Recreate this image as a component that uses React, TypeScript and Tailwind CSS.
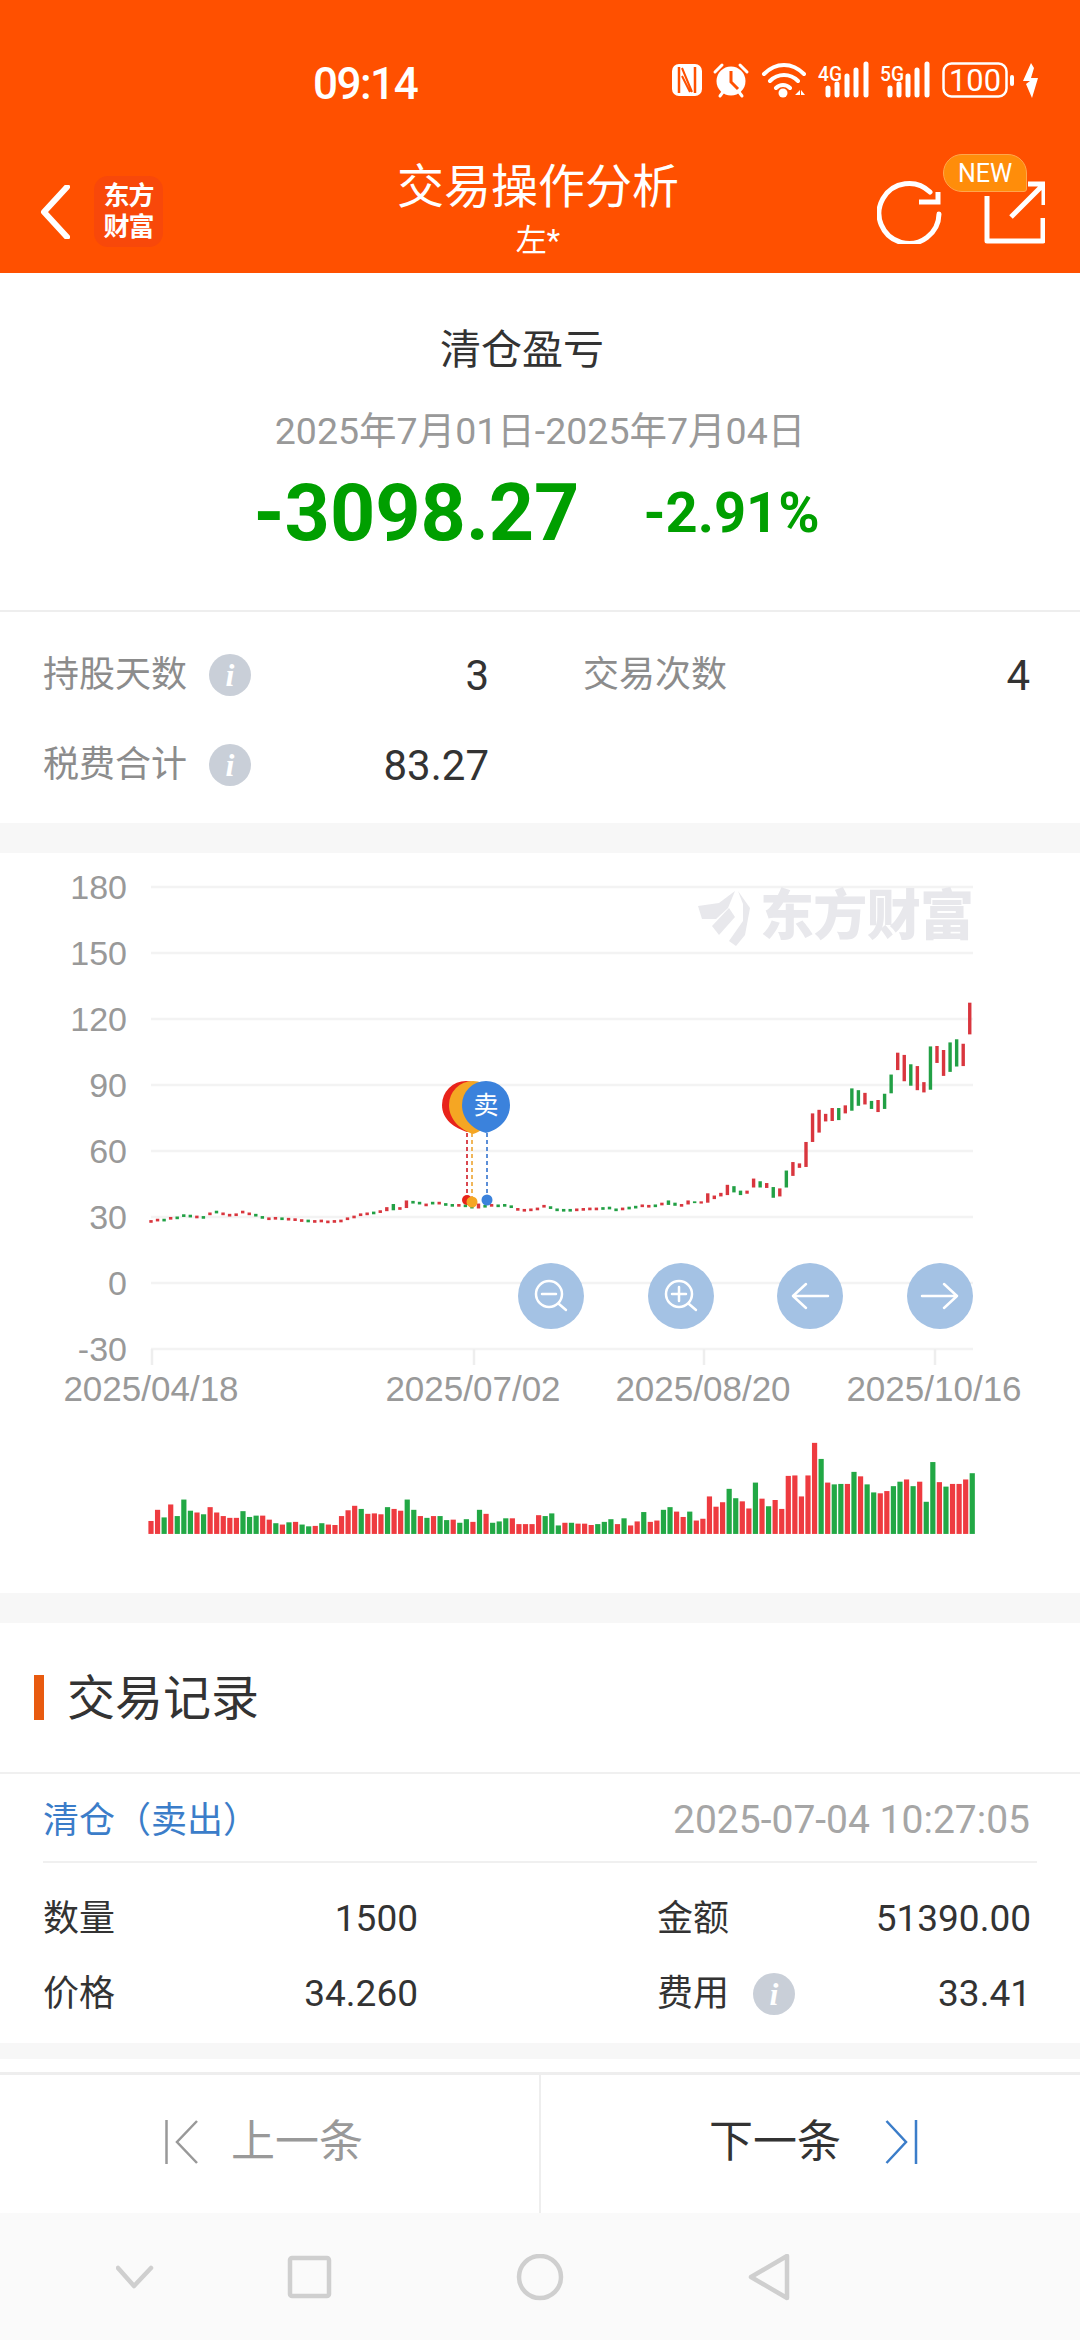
const sans = "font-['Roboto','Noto_Sans_CJK_SC',sans-serif]";

// volume bar tops and colours, read off the chart (y in zoomed crop units)
const volTops = [
  1503, 1478, 1495, 1466, 1492, 1455, 1480, 1484, 1488, 1472, 1484, 1492, 1496, 1496, 1481, 1494, 1491, 1491, 1500, 1508,
  1511, 1506, 1505, 1511, 1515, 1514, 1508, 1511, 1512, 1492, 1479, 1469, 1476, 1487, 1486, 1488, 1472, 1476, 1480, 1455,
  1478, 1492, 1496, 1492, 1492, 1501, 1500, 1507, 1499, 1505, 1478, 1487, 1507, 1504, 1497, 1497, 1510, 1510, 1510, 1490,
  1492, 1486, 1513, 1507, 1507, 1509, 1509, 1512, 1510, 1505, 1499, 1510, 1497, 1513, 1504, 1483, 1505, 1502, 1478, 1472,
  1482, 1494, 1482, 1502, 1498, 1448, 1471, 1461, 1431, 1452, 1459, 1475, 1417, 1453, 1470, 1456, 1476, 1402, 1401, 1448,
  1401, 1328, 1364, 1417, 1421, 1420, 1420, 1393, 1403, 1421, 1439, 1441, 1436, 1425, 1415, 1410, 1425, 1415, 1460, 1371,
  1416, 1426, 1420, 1420, 1410, 1396,
];
const volColors =
  "RRGRGGGRGRRRRRGGGRRGRGRGGRGRRRRRGRRRGRRGGRGRGGRGGRGRGGGRRRRR" +
  "GGGRGRRRGGGRGRRGRRGGRRGRRRRRGGRRGRGRRRRRRRGRGGRGRGGRRGGRGRGGRGRRR";

const flatCenters = [
  832, 829, 829, 825, 824, 819, 820, 822, 823, 815, 811, 815, 818, 817, 811, 815, 818, 823, 826, 825,
  826, 827, 828, 830, 831, 832, 831, 833, 832, 831, 826, 822, 817, 815, 813, 810, 805, 800, 803, 793,
  789, 791, 795, 791, 791, 794, 796, 796, 797, 800, 797, 798, 796, 797, 796, 799, 805, 807, 806, 804,
  798, 801, 806, 807, 807, 806, 805, 804, 804, 803, 802, 806, 804, 802, 800, 797, 798, 797, 793,
];
const tallFlat: Record<number, [number, number]> = {
  36: [800, 809],
  37: [793, 807],
  39: [785, 802],
  50: [792, 803],
};
const candleTail: [number, number][] = [
  [785, 795], [790, 797], [793, 799], [785, 794], [787, 791], [787, 792], [769, 790], [774, 782], [768, 776], [750, 773],
  [753, 767], [763, 773], [763, 770], [736, 756], [742, 756], [746, 757], [755, 779], [758, 776], [718, 756], [699, 730],
  [702, 712], [654, 710], [590, 654], [582, 633], [591, 608], [578, 607], [578, 605], [572, 590], [534, 584], [538, 573],
  [544, 570], [562, 580], [560, 587], [546, 580], [503, 545], [454, 493], [459, 518], [480, 528], [484, 538], [520, 543],
  [440, 537], [439, 477], [448, 506], [431, 497], [424, 485], [434, 484], [342, 413],
];
const candleColors =
  "RRGRGGGRGRGRRRRRGGRRGRRRGRRRRRRRRRGRRGRRGGRGRGGRGGRGRGGGRRRRRGGGGRRRRGGGRGGRRGR" +
  "GGRRGRRRRRGGRRGRGRGRRRRRRRGRGGRGRGGRRGRRGRRGGRRRR";

const candles = [
  ...flatCenters.map((c, i) => tallFlat[i] ?? ([c - 3, c + 3] as [number, number])),
  ...candleTail,
];

const toY = (zoomed: number) => 850 + zoomed / 2.24;

const grid = [
  { label: "180", y: 887 },
  { label: "150", y: 953 },
  { label: "120", y: 1019 },
  { label: "90", y: 1085 },
  { label: "60", y: 1151 },
  { label: "30", y: 1217 },
  { label: "0", y: 1283 },
  { label: "-30", y: 1349 },
];
const ticks = [
  { label: "2025/04/18", x: 151 },
  { label: "2025/07/02", x: 473 },
  { label: "2025/08/20", x: 703 },
  { label: "2025/10/16", x: 934 },
];

function InfoDot() {
  return (
    <span className="flex h-[42px] w-[42px] items-center justify-center rounded-full bg-[#c9cfd8] font-['Liberation_Serif',serif] text-[32px] font-bold italic leading-none text-white">
      i
    </span>
  );
}

function StatusIcons() {
  return (
    <div className="flex items-center text-white">
      <svg width="366" height="40" viewBox="672 60 366 40" fill="none">
        {/* nfc */}
        <rect x="672" y="64" width="30" height="32" rx="7" fill="#fff" />
        <path d="M679 67V93M695 67V93" stroke="#ff5000" strokeWidth="2.5" />
        <path d="M682 68L692 92M682 76L690 92" stroke="#ff5000" strokeWidth="2" />
        {/* alarm */}
        <circle cx="731" cy="81" r="14.5" fill="#fff" />
        <path d="M731 71V82L738 89" stroke="#ff5000" strokeWidth="3" />
        <path d="M715 72L722 65M747 72L740 65M720 96L723 92M742 96L739 92" stroke="#fff" strokeWidth="3" strokeLinecap="round" />
        {/* wifi */}
        <path d="M764 74C776 62 792 62 804 74M770 81C778 73 790 73 798 81M776 88C780 84 786 84 790 88" stroke="#fff" strokeWidth="4" strokeLinecap="round" />
        <circle cx="783" cy="93" r="4.5" fill="#fff" />
        <path d="M795 95L800 90V95ZM801 90L805 95H801Z" fill="#fff" />
        {/* signal 4g */}
        <text x="818" y="81" fill="#fff" fontSize="21" fontWeight="500" fontFamily="Roboto, sans-serif" textLength="24" lengthAdjust="spacingAndGlyphs">4G</text>
        <path d="M828 88V95M837 84V95M847 76V95M866 64V95M856 70V95" stroke="#fff" strokeWidth="5" strokeLinecap="round" />
        {/* signal 5g */}
        <text x="880" y="81" fill="#fff" fontSize="21" fontWeight="500" fontFamily="Roboto, sans-serif" textLength="24" lengthAdjust="spacingAndGlyphs">5G</text>
        <path d="M890 88V95M899 84V95M908 76V95M927 64V95M917 70V95" stroke="#fff" strokeWidth="5" strokeLinecap="round" />
        {/* battery */}
        <rect x="943.5" y="63.5" width="63" height="33" rx="8" stroke="#fff" strokeWidth="2.5" />
        <text x="975" y="91" fill="#fff" fontSize="31" textAnchor="middle" fontFamily="Roboto, sans-serif" textLength="52" lengthAdjust="spacingAndGlyphs">100</text>
        <rect x="1010" y="75" width="4" height="11" rx="2" fill="#fff" />
        <path d="M1031 63L1023 81H1030L1026 84L1032 98L1038 78H1031L1034 68Z" fill="#fff" />
      </svg>
    </div>
  );
}

function Header() {
  return (
    <header className="flex h-[273px] flex-col bg-[#ff5000] text-white">
      <div className="flex h-[154px] items-start justify-between pl-[313px] pr-[42px] pt-[60px]">
        <span className="text-[44px] font-medium leading-[48px] tracking-[-1.5px]">09:14</span>
        <StatusIcons />
      </div>
      <div className="grid flex-1 grid-cols-[1fr_auto_1fr] items-start">
        <div className="flex items-center pl-[40px] pt-[22px]">
          <svg width="30" height="54" viewBox="0 0 30 54" fill="none">
            <path d="M27 2L4 27L27 52" stroke="#fff" strokeWidth="6" strokeLinecap="round" strokeLinejoin="round" />
          </svg>
          <div className="ml-[24px] flex h-[71px] w-[69px] flex-col items-center justify-center rounded-[14px] bg-[#f8480a] text-[26px] font-bold leading-[31px] tracking-[-1px]">
            <span>东方</span>
            <span>财富</span>
          </div>
        </div>
        <div className="mr-[4px] flex flex-col items-center pt-[5px]">
          <h1 className="text-[47px] font-normal leading-[56px]">交易操作分析</h1>
          <span className="mt-[8px] text-[31px] leading-[36px]">左*</span>
        </div>
        <div className="relative flex justify-end pr-[35px] pt-[24px]">
          <svg width="168" height="66" viewBox="877 172 168 66" fill="none">
            <path d="M939 208A30 30 0 1 1 930 186" stroke="#fff" strokeWidth="5" strokeLinecap="round" />
            <path d="M919 196H938V186" stroke="#fff" strokeWidth="5" />
            <path d="M987 190V235H1043V212" stroke="#fff" strokeWidth="5" strokeLinejoin="round" />
            <path d="M1011 211L1043 179M1028 178H1044V199" stroke="#fff" strokeWidth="5" />
          </svg>
          <span className="absolute right-[53px] top-0 flex h-[38px] w-[84px] items-center justify-center rounded-[19px] rounded-br-[3px] border border-[#ffa64d] bg-[#ff8d0a] text-[25px] leading-none">
            NEW
          </span>
        </div>
      </div>
    </header>
  );
}

function Summary() {
  return (
    <section className="flex h-[339px] flex-col items-center border-b-2 border-[#eeeeee] bg-white pt-[50px]">
      <h2 className="mr-[36px] text-[41px] font-normal leading-[54px] text-[#333333]">清仓盈亏</h2>
      <p className="mt-[32px] text-[37.5px] leading-[44px] text-[#999999]">2025年7月01日-2025年7月04日</p>
      <div className="mr-[7px] mt-[18px] flex items-center gap-[64px] text-[#009f00]">
        <span className="text-[79px] font-bold leading-[84px]">-3098.27</span>
        <span className="text-[56px] font-bold leading-[60px]">-2.91%</span>
      </div>
    </section>
  );
}

function StatCell({ label, value, info }: { label: string; value: string; info?: boolean }) {
  return (
    <div className="flex h-[50px] items-center justify-between">
      <div className="flex items-center gap-[22px] text-[36px] text-[#8c8c8c]">
        <span>{label}</span>
        {info && <InfoDot />}
      </div>
      <span className="text-[42px] text-[#333333]">{value}</span>
    </div>
  );
}

function Stats() {
  return (
    <section className="h-[211px] bg-white pl-[43px] pt-[38px]">
      <div className="grid grid-cols-[446px_447px] gap-x-[94px] gap-y-[40px]">
        <StatCell label="持股天数" value="3" info />
        <StatCell label="交易次数" value="4" />
        <StatCell label="税费合计" value="83.27" info />
      </div>
    </section>
  );
}

function ChartButton({ children }: { children: React.ReactNode }) {
  return (
    <button type="button" className="flex h-[66px] w-[66px] items-center justify-center rounded-full bg-[#a4c2e4]">
      <svg width="44" height="44" viewBox="0 0 44 44" fill="none" stroke="#fff" strokeWidth="2.5" strokeLinecap="round" strokeLinejoin="round">
        {children}
      </svg>
    </button>
  );
}

function Chart() {
  return (
    <section className="relative mt-[30px] h-[740px] bg-white">
      <svg width="1080" height="740" viewBox="0 853 1080 740" fontFamily="'Liberation Sans', sans-serif" className="block">
        {grid.map((g) => (
          <g key={g.label}>
            <line x1="151" x2="973" y1={g.y} y2={g.y} stroke="#f3f3f3" strokeWidth="2.5" />
            <text x="127" y={g.y + 12} textAnchor="end" fontSize="34" fill="#999999">{g.label}</text>
          </g>
        ))}
        {ticks.map((t) => (
          <g key={t.label}>
            <line x1={t.x + 1} x2={t.x + 1} y1="1349" y2="1365" stroke="#eeeeee" strokeWidth="2.5" />
            <text x={t.x} y="1401" textAnchor="middle" fontSize="35" fill="#999999">{t.label}</text>
          </g>
        ))}

        {/* watermark */}
        <path d="M698 906L719 903L735 891L728 908L716 919L702 919Z" fill="#e8e8ec" />
        <path d="M738 891L750 908L745 935L736 946L729 941L743 921L743 904Z" fill="#e8e8ec" />
        <path d="M712 926L729 908L735 917L719 935Z" fill="#e8e8ec" />
        <text x="760" y="935" fontSize="54" fontWeight="900" fill="#e8e8ec" fontFamily="'Noto Sans CJK SC', sans-serif" textLength="214">东方财富</text>

        {candles.map(([top, bot], i) => (
          <rect
            key={i}
            x={151 + 6.55 * i - 1.7}
            y={toY(top)}
            width="3.4"
            height={(bot - top) / 2.24}
            fill={candleColors[i] === "R" ? "#d9363e" : "#22a045"}
          />
        ))}

        {/* buy / sell markers */}
        <path d="M467 1133V1198" stroke="#d9474f" strokeWidth="2" strokeDasharray="4 3" />
        <path d="M472 1133V1198" stroke="#f0b65a" strokeWidth="2" strokeDasharray="4 3" />
        <path d="M487 1133V1198" stroke="#5b8fd8" strokeWidth="2" strokeDasharray="4 3" />
        <circle cx="467" cy="1200" r="5" fill="#e8231a" />
        <circle cx="472" cy="1202" r="5.5" fill="#f5a623" />
        <circle cx="487" cy="1200" r="5.5" fill="#3b82dc" />
        <path d="M467 1132C455 1128 442 1120 442 1105A24 24 0 0 1 490 1105C490 1120 479 1128 467 1132Z" fill="#e8231a" />
        <path d="M473 1134C461 1130 449 1120 449 1105A24 24 0 0 1 497 1105C497 1120 485 1130 473 1134Z" fill="#f5a623" />
        <path d="M486 1133C474 1130 462 1120 462 1105A24 24 0 0 1 510 1105C510 1120 498 1130 486 1133Z" fill="#3b82dc" />
        <text x="486" y="1114" textAnchor="middle" fontSize="25" fill="#ffffff" fontFamily="'Noto Sans CJK SC', sans-serif">卖</text>

        {volTops.map((top, i) => (
          <rect
            key={i}
            x={151 + 6.57 * i - 2.6}
            y={toY(top)}
            width="5.2"
            height={(1532 - top) / 2.24}
            fill={volColors[i] === "R" ? "#ee3b40" : "#22a845"}
          />
        ))}
      </svg>

      {/* zoom and pan controls over the plot */}
      <div className="absolute left-[518px] top-[410px] flex gap-[63.5px]">
        <ChartButton>
          <circle cx="20" cy="20" r="13" />
          <path d="M13 20H27M30 30L37 36" />
        </ChartButton>
        <ChartButton>
          <circle cx="20" cy="20" r="13" />
          <path d="M13 20H27M20 13V27M30 30L37 36" />
        </ChartButton>
        <ChartButton>
          <path d="M40 22H5M18 10L5 22L18 34" />
        </ChartButton>
        <ChartButton>
          <path d="M4 22H39M26 10L39 22L26 34" />
        </ChartButton>
      </div>
    </section>
  );
}

function RecordCell({ label, value, info }: { label: string; value: string; info?: boolean }) {
  return (
    <div className="flex h-[50px] items-center justify-between text-[#333333]">
      <div className="flex items-center gap-[24px] text-[36px]">
        <span>{label}</span>
        {info && <InfoDot />}
      </div>
      <span className="text-[37px]">{value}</span>
    </div>
  );
}

function Records() {
  return (
    <section className="mt-[30px] h-[420px] bg-white">
      <div className="flex h-[151px] items-center border-b-2 border-[#f0f0f0] pl-[34px]">
        <span className="h-[45px] w-[10px] bg-[#e85a0f]" />
        <h3 className="ml-[23px] mt-[2px] text-[48px] font-normal leading-none text-[#333333]">交易记录</h3>
      </div>
      <div className="mx-[43px] flex h-[89px] items-center justify-between border-b-2 border-[#f0f0f0] pr-[7px] pt-[6px]">
        <span className="text-[36px] text-[#3b7dc9]">清仓（卖出）</span>
        <span className="text-[39px] text-[#a6a6a6]">2025-07-04 10:27:05</span>
      </div>
      <div className="grid grid-cols-[375px_374px] gap-x-[239px] gap-y-[25px] pl-[43px] pt-[31px]">
        <RecordCell label="数量" value="1500" />
        <RecordCell label="金额" value="51390.00" />
        <RecordCell label="价格" value="34.260" />
        <RecordCell label="费用" value="33.41" info />
      </div>
    </section>
  );
}

function Pager() {
  return (
    <div className="mt-[16px] bg-white pt-[13px]">
      <div className="flex h-[141px] border-t-[3px] border-[#eeeeee]">
        <button type="button" className="flex w-[541px] items-center justify-start border-r-2 border-[#eeeeee] pb-[4px] pl-[165px] text-[44px] text-[#999999]">
          <svg width="34" height="44" viewBox="0 0 34 44" fill="none" stroke="#999999" strokeWidth="2.5">
            <path d="M1.5 0V44M32 1L12 22L32 43" />
          </svg>
          <span className="ml-[32px]">上一条</span>
        </button>
        <button type="button" className="flex flex-1 items-center justify-start pb-[4px] pl-[168px] text-[44px] text-[#333333]">
          <span>下一条</span>
          <svg className="ml-[44px]" width="33" height="44" viewBox="0 0 33 44" fill="none" stroke="#3b7dc9" strokeWidth="2.5">
            <path d="M31 0V44M1.5 1L21 22L1.5 43" />
          </svg>
        </button>
      </div>
    </div>
  );
}

function NavBar() {
  return (
    <nav className="flex h-[127px] items-start bg-[#fafafa] pl-[116px] pt-[41px]">
      <svg width="700" height="48" viewBox="116 254 700 48" fill="none" stroke="#cfcfcf" strokeWidth="4.5" strokeLinejoin="round" strokeLinecap="round">
        <path d="M118 268L134 286L151 268" />
        <rect x="290" y="258" width="39" height="38" rx="2" />
        <ellipse cx="540" cy="277" rx="21" ry="21" />
        <path d="M787 256V298L751 277Z" />
      </svg>
    </nav>
  );
}

export default function App() {
  return (
    <div className={`h-[2340px] w-[1080px] overflow-hidden bg-[#f7f7f7] ${sans}`}>
      <Header />
      <Summary />
      <Stats />
      <Chart />
      <Records />
      <Pager />
      <NavBar />
    </div>
  );
}
